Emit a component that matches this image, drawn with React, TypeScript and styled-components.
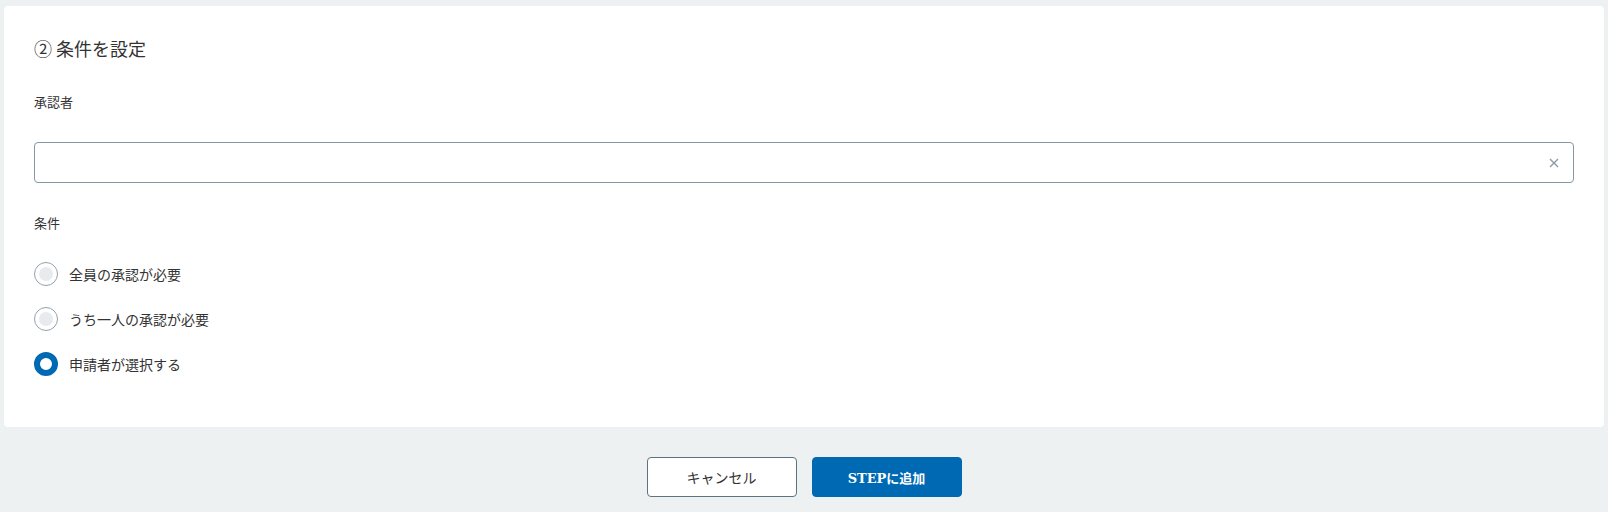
import React, { useState } from "react";
import styled, { createGlobalStyle } from "styled-components";

const GlobalStyle = createGlobalStyle`
  html, body {
    margin: 0;
    padding: 0;
    background: #edf1f2;
  }
  body {
    font-family: "Noto Sans CJK JP", "Noto Sans", sans-serif;
    color: #333;
  }
`;

const Page = styled.div`
  display: flex;
  flex-direction: column;
  align-items: stretch;
  padding: 6px 4px 15px;
  gap: 30px;
`;

const Card = styled.section`
  background: #fff;
  border-radius: 4px;
  padding: 30px 30px 51px;
  display: flex;
  flex-direction: column;
`;

const Title = styled.h2`
  margin: 0;
  font-size: 18px;
  line-height: 25px;
  font-weight: 400;
  color: #333;
`;

const Label = styled.div<{ $top: number }>`
  margin-top: ${(p) => p.$top}px;
  font-size: 13px;
  line-height: 20px;
  color: #333;
`;

const InputBox = styled.div`
  margin-top: 30px;
  height: 41px;
  box-sizing: border-box;
  border: 1px solid #8497a3;
  border-radius: 4px;
  display: flex;
  align-items: center;
  justify-content: flex-end;
  padding-right: 13px;
`;

const ClearButton = styled.button`
  border: none;
  background: none;
  padding: 0;
  width: 12px;
  height: 12px;
  display: flex;
  align-items: center;
  justify-content: center;
  cursor: pointer;
`;

const RadioList = styled.div`
  margin-top: 29px;
  display: flex;
  flex-direction: column;
  gap: 21px;
`;

const RadioRow = styled.label`
  display: flex;
  align-items: center;
  gap: 11px;
  height: 24px;
  font-size: 14px;
  color: #333;
  cursor: pointer;
`;

const RadioDot = styled.span<{ $checked: boolean }>`
  width: 24px;
  height: 24px;
  box-sizing: border-box;
  border-radius: 50%;
  flex: none;
  border: ${(p) => (p.$checked ? "6px solid #0069b3" : "1.5px solid #91a2ad")};
  background: #fff;
  display: flex;
  align-items: center;
  justify-content: center;
  &::after {
    content: "";
    width: 14px;
    height: 14px;
    border-radius: 50%;
    background: #e8eaee;
    display: ${(p) => (p.$checked ? "none" : "block")};
  }
`;

const Footer = styled.div`
  display: flex;
  justify-content: center;
  gap: 15px;
`;

const Button = styled.button<{ $primary?: boolean }>`
  width: 150px;
  height: 40px;
  box-sizing: border-box;
  border-radius: 4px;
  font-size: ${(p) => (p.$primary ? 13 : 14)}px;
  cursor: pointer;
  border: 1px solid ${(p) => (p.$primary ? "#0069b3" : "#5e7381")};
  background: ${(p) => (p.$primary ? "#0069b3" : "#fff")};
  color: ${(p) => (p.$primary ? "#fff" : "#333")};
  font-weight: ${(p) => (p.$primary ? 700 : 400)};
  font-family: ${(p) =>
    p.$primary
      ? '"DejaVu Serif", "Noto Sans CJK JP", serif'
      : '"Noto Sans CJK JP", sans-serif'};
`;

const options = ["全員の承認が必要", "うち一人の承認が必要", "申請者が選択する"];

export default function App() {
  const [selected, setSelected] = useState(2);
  return (
    <>
      <GlobalStyle />
      <Page>
        <Card>
          <Title>② 条件を設定</Title>
          <Label $top={31}>承認者</Label>
          <InputBox>
            <ClearButton aria-label="clear">
              <svg width="10" height="10" viewBox="0 0 10 10">
                <path d="M1 1L9 9M9 1L1 9" stroke="#8799a5" strokeWidth="1.3" />
              </svg>
            </ClearButton>
          </InputBox>
          <Label $top={30}>条件</Label>
          <RadioList>
            {options.map((o, i) => (
              <RadioRow key={o} onClick={() => setSelected(i)}>
                <RadioDot $checked={selected === i} />
                {o}
              </RadioRow>
            ))}
          </RadioList>
        </Card>
        <Footer>
          <Button>キャンセル</Button>
          <Button $primary>STEPに追加</Button>
        </Footer>
      </Page>
    </>
  );
}
